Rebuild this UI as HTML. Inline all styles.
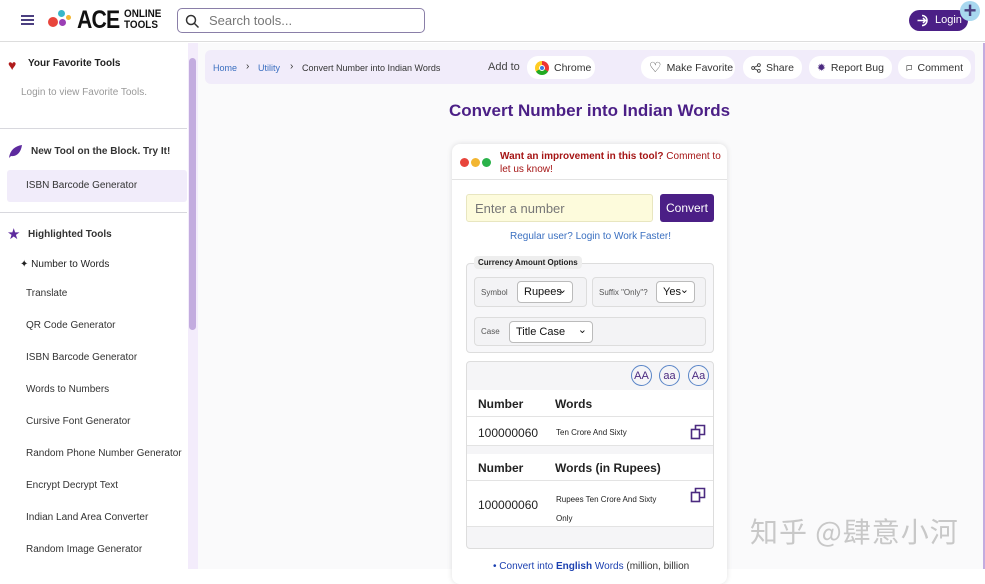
<!DOCTYPE html>
<html><head><meta charset="utf-8"><style>
*{box-sizing:border-box;margin:0;padding:0}
body{width:985px;height:569px;overflow:hidden;font-family:"Liberation Sans",Arial,sans-serif;background:#fff;position:relative;color:#222}
div{white-space:nowrap}
.abs{position:absolute}
.hdr{left:0;top:0;width:985px;height:42px;border-bottom:1px solid #ddd;background:#fff}
.side{left:0;top:43px;width:188px;height:526px;background:#fff}
.sb{left:188px;top:43px;width:10px;height:526px;background:#f3ecfb}
.thumb{left:189px;top:58px;width:7px;height:272px;background:#c3acdf;border-radius:4px}
.main{left:198px;top:43px;width:787px;height:526px;background:#fafafb}
.sep{height:1px;background:#d8d8de;position:absolute;left:0;width:187px}
.it{position:absolute;left:26px;font-size:10px;color:#333}
.bc{left:205px;top:50px;width:770px;height:34px;background:#f1ecfa;border-radius:6px}
.pill{position:absolute;top:56px;height:23px;background:#fff;border-radius:11px;font-size:10.5px;color:#333;display:flex;align-items:center;gap:5px;padding:0 8px;white-space:nowrap}
.card{left:452px;top:144px;width:275px;height:440px;background:#fff;border-radius:8px;box-shadow:0 0 6px rgba(0,0,0,.12)}
.dot{position:absolute;width:9px;height:9px;border-radius:50%;top:158px}
.sel{position:absolute;height:22px;background:#fff;border:1px solid #bbb;border-radius:4px;font-size:11px;color:#111;display:flex;align-items:center;padding-left:6px}
.sel:after{content:"⌄";position:absolute;right:5px;top:1px;font-size:11px}
.fld{position:absolute;background:#f7f7f9;border:1px solid #ddd;border-radius:4px}
.lbl{position:absolute;font-size:8px;color:#555}
.cc{position:absolute;width:21px;height:21px;border:1.5px solid #5b86c8;border-radius:50%;font-size:11px;color:#4b2a80;display:flex;align-items:center;justify-content:center;top:365px}
.row{position:absolute;left:467px;width:246px;border-bottom:1px solid #e3e3e3;background:#fff}
.th{position:absolute;font-size:12px;font-weight:bold;color:#222}
.num{position:absolute;font-size:12px;color:#222}
.w{position:absolute;font-size:8px;color:#222}
</style></head><body>
<div class="abs hdr"></div>
<div class="abs" style="left:21px;top:15px;width:13px;height:2px;background:#4b3f80;box-shadow:0 4px 0 #4b3f80,0 8px 0 #4b3f80"></div>
<div class="abs" style="left:48px;top:17px;width:10px;height:10px;border-radius:50%;background:#e8453c"></div>
<div class="abs" style="left:58px;top:10px;width:7px;height:7px;border-radius:50%;background:#38b6c8"></div>
<div class="abs" style="left:59px;top:19px;width:7px;height:7px;border-radius:50%;background:#9b3fb5"></div>
<div class="abs" style="left:66px;top:15px;width:5px;height:5px;border-radius:50%;background:#f2b632"></div>
<div class="abs" style="left:77px;top:6px;font-size:25px;font-weight:900;letter-spacing:-1px;color:#111;transform:scaleX(.85);transform-origin:left">ACE</div>
<div class="abs" style="left:124px;top:9px;font-size:11px;line-height:11px;font-weight:bold;color:#111;transform:scaleX(.9);transform-origin:left">ONLINE<br>TOOLS</div>
<div class="abs" style="left:177px;top:8px;width:248px;height:25px;border:1.5px solid #8a7fa8;border-radius:5px"></div>
<svg class="abs" style="left:185px;top:14px" width="15" height="15" viewBox="0 0 15 15"><circle cx="6" cy="6" r="4.5" fill="none" stroke="#333" stroke-width="1.5"/><path d="M9.5 9.5L13.5 13.5" stroke="#333" stroke-width="1.5"/></svg>
<div class="abs" style="left:209px;top:13px;font-size:13px;color:#777">Search tools...</div>
<div class="abs" style="left:909px;top:10px;width:59px;height:21px;border-radius:11px;background:#4b1f86"></div>
<svg class="abs" style="left:916px;top:13px" width="15" height="15" viewBox="0 0 15 15"><path d="M6 2.5a5 5 0 1 1 0 10M1.5 7.5h8M7 5l2.5 2.5L7 10" fill="none" stroke="#fff" stroke-width="1.5"/></svg>
<div class="abs" style="left:935px;top:14px;font-size:11px;color:#fff">Login</div>
<div class="abs" style="left:960px;top:1px;width:20px;height:20px;border-radius:50%;background:#a8d8ef;color:#4b3f80;font-size:22px;font-weight:bold;line-height:19px;text-align:center">+</div>

<div class="abs side">
<div class="abs" style="left:8px;top:14px;color:#b01b1b;font-size:14px">♥</div>
<div class="it" style="left:28px;top:15px;font-weight:bold;color:#222">Your Favorite Tools</div>
<div class="it" style="left:21px;top:44px;color:#999">Login to view Favorite Tools.</div>
<div class="sep" style="top:85px"></div>
<svg class="abs" style="left:8px;top:101px" width="15" height="15" viewBox="0 0 15 15"><path d="M1 14C2 6 7 2 14 1 13 8 9 13 3 12z" fill="#5d2a9e"/></svg>
<div class="it" style="left:31px;top:103px;font-weight:bold">New Tool on the Block. Try It!</div>
<div class="abs" style="left:7px;top:127px;width:180px;height:32px;background:#f1ecfa;border-radius:3px"></div>
<div class="it" style="top:137px">ISBN Barcode Generator</div>
<div class="sep" style="top:169px"></div>
<div class="abs" style="left:7px;top:182px;color:#5d2a9e;font-size:15px">★</div>
<div class="it" style="left:28px;top:186px;font-weight:bold">Highlighted Tools</div>
<div class="it" style="left:20px;top:216px;color:#222">✦ Number to Words</div>
<div class="it" style="top:245px">Translate</div>
<div class="it" style="top:277px">QR Code Generator</div>
<div class="it" style="top:309px">ISBN Barcode Generator</div>
<div class="it" style="top:341px">Words to Numbers</div>
<div class="it" style="top:373px">Cursive Font Generator</div>
<div class="it" style="top:405px">Random Phone Number Generator</div>
<div class="it" style="top:437px">Encrypt Decrypt Text</div>
<div class="it" style="top:469px">Indian Land Area Converter</div>
<div class="it" style="top:501px">Random Image Generator</div>
</div>
<div class="abs sb"></div><div class="abs thumb"></div>
<div class="abs main"></div>
<div class="abs" style="left:983px;top:43px;width:2px;height:526px;background:#c3acdf"></div>
<div class="abs bc"></div>
<div class="abs" style="left:213px;top:63px;font-size:9px;color:#3a6fc0">Home</div>
<div class="abs" style="left:246px;top:61px;font-size:10px;color:#333">›</div>
<div class="abs" style="left:258px;top:63px;font-size:9px;color:#3a6fc0">Utility</div>
<div class="abs" style="left:290px;top:61px;font-size:10px;color:#333">›</div>
<div class="abs" style="left:302px;top:63px;font-size:9px;color:#333">Convert Number into Indian Words</div>
<div class="abs" style="left:488px;top:61px;font-size:11px;color:#444">Add to</div>
<div class="pill" style="left:527px;width:68px"><span style="width:14px;height:14px;border-radius:50%;background:conic-gradient(#e33 0 120deg,#2a2 120deg 240deg,#fc2 240deg);display:inline-flex;align-items:center;justify-content:center;flex:none"><span style="width:6px;height:6px;border-radius:50%;background:#3b7be0;border:1px solid #fff"></span></span>Chrome</div>
<div class="pill" style="left:641px;width:94px"><span style="font-size:14px">♡</span>Make Favorite</div>
<div class="pill" style="left:743px;width:59px"><svg width="12" height="12" viewBox="0 0 12 12"><circle cx="9.5" cy="2.5" r="1.7" fill="none" stroke="#333"/><circle cx="2.5" cy="6" r="1.7" fill="none" stroke="#333"/><circle cx="9.5" cy="9.5" r="1.7" fill="none" stroke="#333"/><path d="M4 5.2L8 3.2M4 6.8L8 8.8" stroke="#333"/></svg>Share</div>
<div class="pill" style="left:809px;width:83px"><span style="color:#4b2a80">✹</span>Report Bug</div>
<div class="pill" style="left:898px;width:73px"><svg width="12" height="12" viewBox="0 0 12 12"><path d="M1.5 1.5h9v7h-6l-3 2.5z" fill="none" stroke="#333"/></svg>Comment</div>
<div class="abs" style="left:449px;top:101px;font-size:17px;font-weight:bold;color:#4b1f86">Convert Number into Indian Words</div>

<div class="abs card"></div>
<div class="dot" style="left:460px;background:#e8453c"></div><div class="dot" style="left:471px;background:#f2b632"></div><div class="dot" style="left:482px;background:#2ab24a"></div>
<div class="abs" style="left:500px;top:150px;font-size:10px;line-height:13px;color:#a51515;width:225px;white-space:normal"><b>Want an improvement in this tool?</b> Comment to let us know!</div>
<div class="abs" style="left:452px;top:179px;width:275px;height:1px;background:#e3e3e3"></div>
<div class="abs" style="left:466px;top:194px;width:187px;height:28px;background:#fdfbdc;border:1px solid #e8e6c0;border-radius:3px;font-size:13px;color:#777;padding:6px 8px">Enter a number</div>
<div class="abs" style="left:660px;top:194px;width:54px;height:28px;background:#4b1f86;border-radius:3px;color:#fff;font-size:12px;text-align:center;line-height:28px">Convert</div>
<div class="abs" style="left:510px;top:231px;font-size:10px;color:#3a6fc0">Regular user? Login to Work Faster!</div>
<div class="fld" style="left:466px;top:263px;width:248px;height:90px"></div>
<div class="abs" style="left:474px;top:256px;padding:2px 4px;background:#eee;border-radius:4px;font-size:8px;font-weight:bold;color:#222">Currency Amount Options</div>
<div class="fld" style="left:474px;top:277px;width:113px;height:30px;background:#f3f3f5"></div>
<div class="lbl" style="left:481px;top:288px">Symbol</div>
<div class="sel" style="left:517px;top:281px;width:56px">Rupees</div>
<div class="fld" style="left:592px;top:277px;width:114px;height:30px;background:#f3f3f5"></div>
<div class="lbl" style="left:599px;top:288px">Suffix "Only"?</div>
<div class="sel" style="left:656px;top:281px;width:39px">Yes</div>
<div class="fld" style="left:474px;top:317px;width:232px;height:29px;background:#f3f3f5"></div>
<div class="lbl" style="left:481px;top:327px">Case</div>
<div class="sel" style="left:509px;top:321px;width:84px">Title Case</div>
<div class="fld" style="left:466px;top:361px;width:248px;height:188px;background:#f5f5f7"></div>
<div class="cc" style="left:631px">AA</div><div class="cc" style="left:659px">aa</div><div class="cc" style="left:688px">Aa</div>
<div class="row" style="top:390px;height:27px"></div>
<div class="th" style="left:478px;top:397px">Number</div><div class="th" style="left:555px;top:397px">Words</div>
<div class="row" style="top:417px;height:29px"></div>
<div class="num" style="left:478px;top:426px">100000060</div><div class="w" style="left:556px;top:428px">Ten Crore And Sixty</div>
<div class="row" style="top:454px;height:27px"></div>
<div class="th" style="left:478px;top:461px">Number</div><div class="th" style="left:555px;top:461px">Words (in Rupees)</div>
<div class="row" style="top:481px;height:46px"></div>
<div class="num" style="left:478px;top:498px">100000060</div><div class="w" style="left:556px;top:490px;line-height:19px">Rupees Ten Crore And Sixty<br>Only</div>
<svg class="abs" style="left:690px;top:424px" width="16" height="16" viewBox="0 0 16 16"><rect x="1.5" y="5.5" width="8" height="9" fill="none" stroke="#4b2a80" stroke-width="1.6"/><path d="M5.5 5.5V1.5h9v9h-5" fill="none" stroke="#4b2a80" stroke-width="1.6"/></svg>
<svg class="abs" style="left:690px;top:487px" width="16" height="16" viewBox="0 0 16 16"><rect x="1.5" y="5.5" width="8" height="9" fill="none" stroke="#4b2a80" stroke-width="1.6"/><path d="M5.5 5.5V1.5h9v9h-5" fill="none" stroke="#4b2a80" stroke-width="1.6"/></svg>
<div class="abs" style="left:493px;top:561px;font-size:10px;color:#1a3fb0">• Convert into <b>English</b> Words <span style="color:#333">(million, billion</span></div>
<div class="abs" style="left:750px;top:511px;font-size:28px;color:#c8c8c8;font-family:'Noto Sans CJK SC',sans-serif;letter-spacing:1px">知乎 @肆意小河</div>
</body></html>
